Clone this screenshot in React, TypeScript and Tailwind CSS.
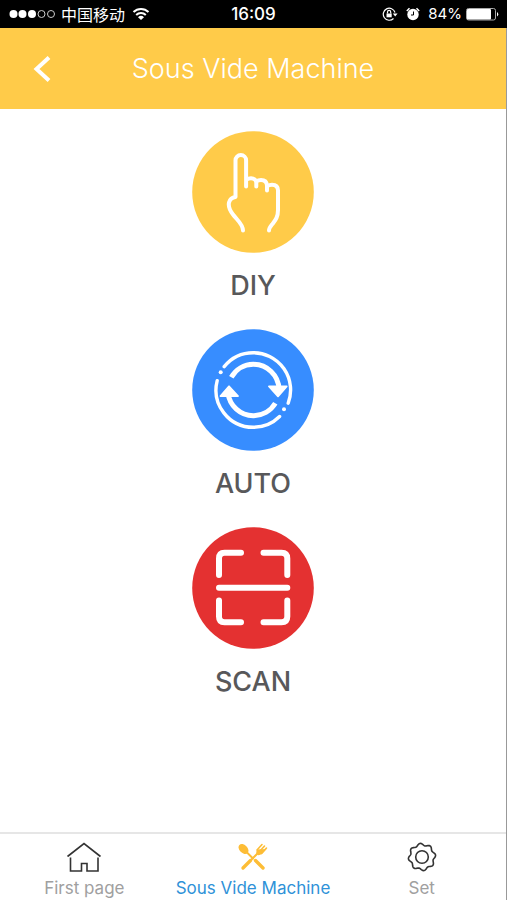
import type { ReactNode } from "react";

const gearOutline =
  Array.from({ length: 120 }, (_, i) => {
    const a = (i * Math.PI) / 60;
    const r = 12.6 + 1.1 * Math.cos(8 * (a + 1.71));
    return `${i ? "L" : "M"}${(16 + r * Math.cos(a)).toFixed(2)} ${(17 + r * Math.sin(a)).toFixed(2)}`;
  }).join("") + "z";

function StatusBar() {
  return (
    <div className="grid h-7 grid-cols-[1fr_auto_1fr] items-center bg-black px-2 text-white">
      <div className="flex items-center gap-1.5">
        <svg width="47" height="10" viewBox="0 0 47 10" aria-label="Signal">
          <g fill="#fff">
            <circle cx="5.500" cy="5" r="4" />
            <circle cx="14.500" cy="5" r="4" />
            <circle cx="24" cy="5" r="4" />
          </g>
          <g fill="none" stroke="#ccc">
            <circle cx="33.500" cy="5" r="3.500" />
            <circle cx="43" cy="5" r="3.500" />
          </g>
        </svg>
        <span className="font-['Noto_Sans_CJK_SC',sans-serif] text-base leading-7">中国移动</span>
        <svg width="20" height="14" viewBox="0 0 18 14" fill="none" stroke="#fff" strokeWidth="2" aria-label="Wi-Fi">
          <path d="M1.500 5a10.600 10.600 0 0 1 15 0M4.200 8a6.800 6.800 0 0 1 9.600 0" />
          <path d="M9 13L6 10.200a4.300 4.300 0 0 1 6 0z" fill="#fff" stroke="none" />
        </svg>
      </div>
      <span className="text-[17px] font-medium leading-7">16:09</span>
      <div className="flex items-center justify-end gap-2">
        <svg width="16" height="14" viewBox="0 0 16 14" fill="none" stroke="#fff" strokeWidth="1.200" aria-label="Rotation lock">
          <path d="M13 5.500A6 6 0 1 0 11.500 11.500" />
          <path d="M10.800 6.500h4.800l-2.400 3z" fill="#fff" stroke="none" />
          <path d="M4.500 6.500h5.200v3.800H4.500z" fill="#fff" stroke="none" />
          <path d="M5.500 6.500V5a1.600 1.600 0 0 1 3.200 0v1.500" />
        </svg>
        <svg width="14" height="14" viewBox="0 0 14 14" aria-label="Alarm">
          <circle cx="7" cy="7.500" r="5.700" fill="#fff" />
          <path d="M.8 4L3.500 1.200M13.200 4L10.500 1.200" stroke="#fff" strokeWidth="1.500" />
          <path d="M7.500 4.500v3.500H5" fill="none" stroke="#000" />
        </svg>
        <span className="-mr-1 text-[15px] leading-7">84%</span>
        <svg width="33" height="14" viewBox="0 0 33 14" aria-label="Battery">
          <rect x=".5" y="1.500" width="29" height="11.500" rx="2" fill="none" stroke="#aaa" />
          <rect x="1" y="2" width="24" height="10.500" rx="1" fill="#fff" />
          <path d="M31 5q2.500 2.200 0 4.500z" fill="#fff" />
        </svg>
      </div>
    </div>
  );
}

function Mode({ label, color, children }: { label: string; color: string; children: ReactNode }) {
  return (
    <button type="button" className="flex flex-col items-center gap-3">
      <svg
        width="122"
        height="122"
        viewBox="0 0 122 122"
        fill="none"
        stroke="#fff"
        strokeLinecap="round"
        strokeLinejoin="round"
        aria-hidden="true"
      >
        <circle cx="61" cy="61" r="60.800" fill={color} stroke="none" />
        {children}
      </svg>
      <span className="text-[27px] font-medium leading-[42px] text-[#58585a]">{label}</span>
    </button>
  );
}

function Tab({ label, active, children }: { label: string; active?: boolean; children: ReactNode }) {
  return (
    <a
      href="#"
      aria-current={active ? "page" : undefined}
      className={`flex flex-1 flex-col items-center gap-1 text-[17px] leading-6 ${active ? "text-[#2f92d8]" : "text-[#a0a0a0]"}`}
    >
      {children}
      <span className="whitespace-nowrap">{label}</span>
    </a>
  );
}

export default function App() {
  return (
    <div className="flex min-h-screen flex-col bg-white font-[Inter,sans-serif]">
      <StatusBar />
      <div className="flex flex-1 flex-col border-r border-black/40 bg-clip-border">
        <header className="grid h-[81px] grid-cols-[64px_1fr_64px] items-center bg-[#ffcb49]">
          <button type="button" aria-label="Back" className="flex h-full items-center justify-end pr-3">
            <svg width="20" height="28" viewBox="0 0 20 28" fill="none" stroke="#fff" strokeWidth="4">
              <path d="M17 2.500L4.500 14L17 25.500" />
            </svg>
          </button>
          <h1 className="text-center text-[27px] font-light leading-9 text-white">Sous Vide Machine</h1>
        </header>

        <main className="flex flex-1 flex-col items-center gap-[22px] pt-[22px]">
          <Mode label="DIY" color="#ffcb49">
            <path
              strokeWidth="4"
              d="M51 99.500C51 93 45 89 41 83.500C37.500 79 36 76 37 71.500C38 67.500 40 66.500 43.500 66V29.300a5.300 5.300 0 0 1 10.600 0V55.500V48.800C56 47.600 57.500 47.200 59 47.200C62.500 47.200 64.300 49.500 64.300 52V55.500V50.500C66 49.300 67.500 49 69 49C73 49 74.800 51.500 75 54.500V59.500V55C77 54 78.500 53.700 80 53.700C84.500 53.700 86 56 86 59.500V79C86 86 83.500 89 80.500 93C78.500 95.500 77 97 77 99.500"
            />
          </Mode>
          <Mode label="AUTO" color="#378dff">
            <path
              strokeWidth="3.400"
              d="M32.200 37.600A37.300 37.300 0 0 1 61.300 23.700A37.300 37.300 0 0 1 96.200 74.200M25.200 51.700A37.300 37.300 0 0 0 61.300 98.300A37.300 37.300 0 0 0 87.600 87.500"
            />
            <path
              strokeWidth="5"
              strokeLinecap="butt"
              d="M39.300 48.300A25.700 25.700 0 0 1 61.300 35.300A25.700 25.700 0 0 1 87 60M36 64A25.700 25.700 0 0 0 61.300 86.700A25.700 25.700 0 0 0 83.300 74.300"
            />
            <g fill="#fff" stroke="none">
              <circle cx="28.700" cy="43.300" r="2" />
              <circle cx="92" cy="80.300" r="2" />
            </g>
            <path d="M77 57.500H94.700L86 67.300zM28.500 67H46L37 57.300z" fill="#fff" strokeWidth="1.800" />
          </Mode>
          <Mode label="SCAN" color="#e43131">
            <path
              strokeWidth="6"
              d="M27 48V31.500Q27 25.700 32.500 25.700H49M71.500 25.700H89.500Q95.300 25.700 95.300 31.500V48M27 73.500V89.500Q27 95.300 32.500 95.300H49M71.500 95.300H89.500Q95.300 95.300 95.300 89.500V73.500M27 60.700H95.300"
            />
          </Mode>
        </main>

        <nav className="flex border-t-2 border-[#e6e6e6] bg-white pt-1.5">
          <Tab label="First page">
            <svg width="36" height="32" viewBox="0 0 36 32" fill="none" stroke="#333" strokeWidth="1.600">
              <path d="M1.500 16.500L18 3.500L34.500 16.500M4.500 17.500V31H15.500V23.500H21V31H32V17.500" />
            </svg>
          </Tab>
          <Tab label="Sous Vide Machine" active>
            <svg width="32" height="32" viewBox="0 0 32 32" fill="#fdbd36" stroke="#fdbd36" strokeLinecap="round">
              <ellipse cx="6.500" cy="9" rx="4" ry="5.800" transform="rotate(-45 6.500 9)" stroke="none" />
              <path d="M9.500 12L16 18.500" strokeWidth="2" />
              <path d="M18.500 20.500L26 28" strokeWidth="3.400" />
              <path d="M6 28L13.500 20.500" strokeWidth="3.400" />
              <path d="M14 20L21 13" strokeWidth="2" />
              <path d="M20 9.500Q18.500 13 20 14.500T25 14L29.500 9" stroke="none" />
              <path d="M20 10L25 4.500M22.500 11.500L27.500 6M24.500 13.500L29.500 8" strokeWidth="1.600" />
            </svg>
          </Tab>
          <Tab label="Set">
            <svg width="32" height="32" viewBox="0 0 32 32" fill="none" stroke="#333" strokeWidth="1.600">
              <circle cx="16" cy="17" r="6.300" />
              <path d={gearOutline} />
            </svg>
          </Tab>
        </nav>
      </div>
    </div>
  );
}
